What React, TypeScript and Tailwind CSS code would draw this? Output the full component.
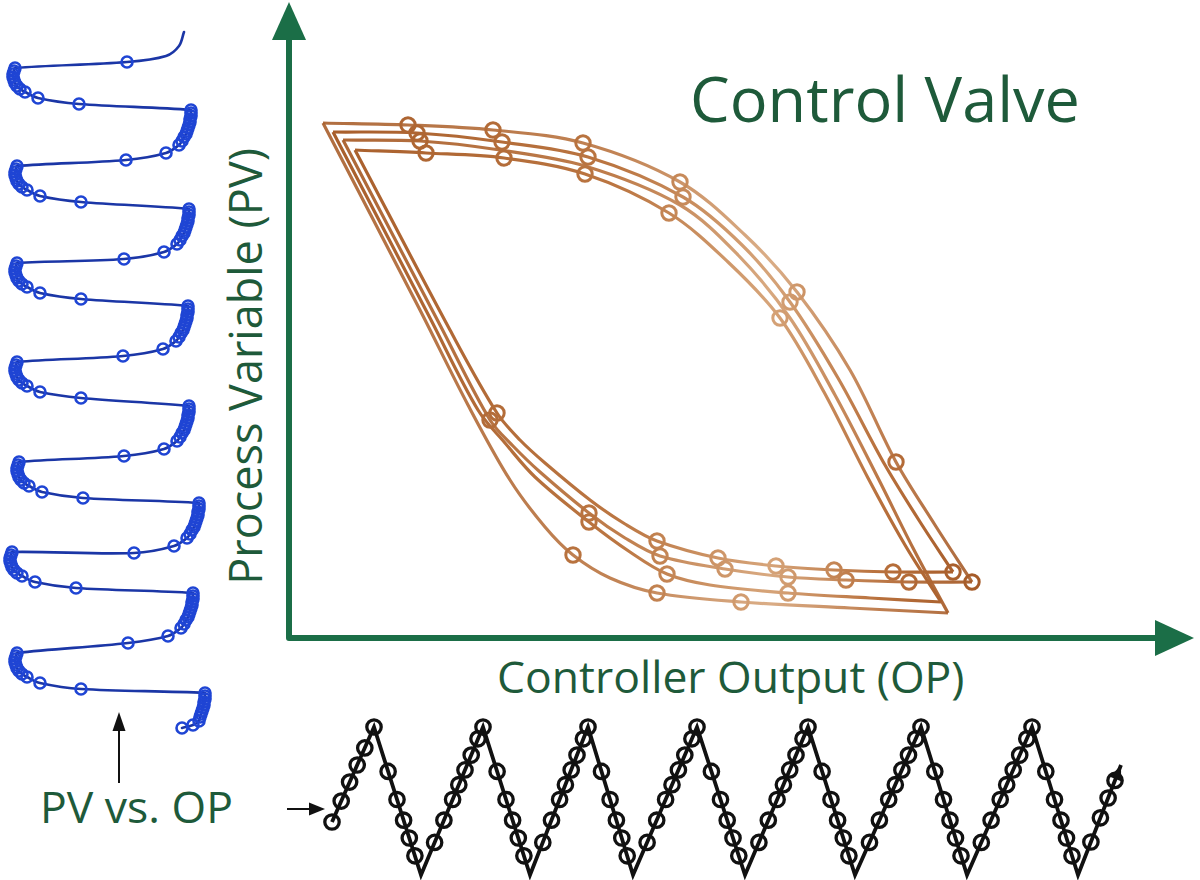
import React from "react";

type Pt = [number, number];
type Node = [number, number, number?];

const GREEN = "#1b6e47";
const INK = "#111111";

const unit = (x: number, y: number): Pt => {
  const l = Math.hypot(x, y) || 1;
  return [x / l, y / l];
};

const r1 = (n: number) => Math.round(n * 10) / 10;

// smooth curve through points, tangent length limited per segment so tight clusters don't overshoot
function smoothPath(nodes: Node[]): string {
  const pts = nodes.map((n) => [n[0], n[1]] as Pt);
  let d = `M${pts[0][0]} ${pts[0][1]}`;
  for (let i = 0; i < pts.length - 1; i++) {
    const p0 = pts[i - 1] ?? pts[i];
    const p1 = pts[i];
    const p2 = pts[i + 1];
    const p3 = pts[i + 2] ?? p2;
    const len = Math.hypot(p2[0] - p1[0], p2[1] - p1[1]) / 3;
    const t1 = unit(p2[0] - p0[0], p2[1] - p0[1]);
    const t2 = unit(p3[0] - p1[0], p3[1] - p1[1]);
    d += ` C${r1(p1[0] + t1[0] * len)} ${r1(p1[1] + t1[1] * len)} ${r1(p2[0] - t2[0] * len)} ${r1(p2[1] - t2[1] * len)} ${p2[0]} ${p2[1]}`;
  }
  return d;
}

const marks = (nodes: Node[]) => nodes.filter((n) => n[2]);

// ---------- blue PV vs OP trace ----------
const lefts: Pt[] = [[15, 68], [17, 166], [17, 263], [17, 362], [19, 462], [12, 552], [17, 653]];
const rights: Pt[] = [[191, 110], [189, 209], [188, 306], [189, 406], [199, 503], [193, 593], [205, 693]];
const leftCluster: Pt[] = [[0, 0], [-1, 3], [-2, 6], [-2, 9], [-1, 12], [0, 15], [2, 18], [5, 21], [10, 24]];
const rightCluster: Pt[] = [[0, 0], [0, 3], [0, 6], [-1, 9], [-1, 12], [-2, 15], [-3, 18], [-4, 21], [-5, 24], [-7, 27], [-9, 31], [-12, 35]];
const rightEnd: Pt[] = [[0, 0], [0, 3], [0, 6], [-1, 9], [-1, 12], [-2, 15], [-3, 18], [-4, 21], [-5, 24], [-6, 28], [-12, 32], [-23, 35]];

const blueNodes: Node[] = [[184, 32], [179, 46], [166, 56], [127, 62, 1]];
lefts.forEach((l, i) => {
  leftCluster.forEach(([dx, dy]) => blueNodes.push([l[0] + dx, l[1] + dy, 1]));
  blueNodes.push([l[0] + 23, l[1] + 30, 1], [l[0] + 64, l[1] + 36, 1]);
  const r = rights[i];
  const last = i === lefts.length - 1;
  (last ? rightEnd : rightCluster).forEach(([dx, dy]) => blueNodes.push([r[0] + dx, r[1] + dy, 1]));
  if (!last) blueNodes.push([r[0] - 25, r[1] + 43, 1], [r[0] - 65, r[1] + 50, 1]);
});

// ---------- copper hysteresis loops ----------
const topBranches: Node[][] = [
  [[323, 123], [408, 125, 1], [493, 130, 1], [583, 143, 1], [680, 182, 1], [745, 235], [797, 292, 1], [850, 370], [896, 462, 1], [935, 525], [972, 582, 1]],
  [[333, 132], [417, 133, 1], [502, 142, 1], [588, 157, 1], [683, 197, 1], [742, 245], [790, 302, 1], [838, 378], [885, 465], [922, 525], [953, 572, 1]],
  [[343, 140], [420, 141, 1], [500, 150], [585, 166], [680, 205], [738, 255], [790, 318], [835, 395], [878, 478], [913, 548], [948, 613]],
  [[355, 150], [426, 153, 1], [504, 158, 1], [585, 174, 1], [669, 213, 1], [728, 262], [780, 318, 1], [824, 392], [868, 478], [905, 545], [941, 602]],
];

const bottomBranches: Node[][] = [
  [[323, 123], [420, 310], [468, 405], [510, 480], [545, 527], [573, 555, 1], [610, 578], [657, 593, 1], [741, 602, 1], [850, 608], [948, 613]],
  [[333, 132], [430, 318], [478, 410], [505, 443], [535, 477], [589, 522, 1], [630, 552], [667, 574, 1], [710, 585], [788, 593, 1], [870, 598], [941, 602]],
  [[343, 140], [440, 325], [490, 420, 1], [513, 446], [540, 472], [589, 513, 1], [625, 538], [660, 556, 1], [725, 569, 1], [788, 577, 1], [846, 580, 1], [909, 582, 1], [972, 582]],
  [[355, 150], [450, 330], [497, 413, 1], [520, 440], [545, 463], [590, 500], [625, 524], [657, 541, 1], [718, 558, 1], [776, 566, 1], [834, 570, 1], [893, 572, 1], [953, 572]],
];

const loopOpacity = [0.9, 1, 0.95, 1];

// ---------- black sawtooth (controller output) ----------
const peaks = [374, 483, 588, 697, 808, 921, 1032];
const troughs = [421, 530, 633, 745, 855, 967, 1078];
const TOP = 727;
const BOT = 875;
const START: Pt = [332, 822];
const END: Pt = [1121, 765];

const lerp = (a: Pt, b: Pt, t: number): Pt => [a[0] + (b[0] - a[0]) * t, a[1] + (b[1] - a[1]) * t];

const sawVerts: Pt[] = [START];
peaks.forEach((p, i) => sawVerts.push([p, TOP], [troughs[i], BOT]));
sawVerts.push(END);

const sawDots: Pt[] = [];
[0, 0.22, 0.42, 0.6, 0.78, 1].forEach((t) => sawDots.push(lerp(START, [peaks[0], TOP], t)));
peaks.forEach((p, i) => {
  const pk: Pt = [p, TOP];
  const tr: Pt = [troughs[i], BOT];
  [0.3, 0.49, 0.63, 0.75, 0.87].forEach((t) => sawDots.push(lerp(pk, tr, t)));
  if (i < peaks.length - 1) {
    [0.22, 0.37, 0.51, 0.61, 0.71, 0.81, 0.92, 1].forEach((t) => sawDots.push(lerp(tr, [peaks[i + 1], TOP], t)));
  }
});
[0.3, 0.52, 0.7, 0.86].forEach((t) => sawDots.push(lerp([troughs[6], BOT], END, t)));

const endDir = unit(END[0] - troughs[6], END[1] - BOT);
const endHead = () => {
  const [ux, uy] = endDir;
  const bx = END[0] - ux * 15;
  const by = END[1] - uy * 15;
  return `${END[0]},${END[1]} ${r1(bx - uy * 6)},${r1(by + ux * 6)} ${r1(bx + uy * 6)},${r1(by - ux * 6)}`;
};

function App() {
  return (
    <div className="w-[1200px] h-[880px] bg-white overflow-hidden flex flex-col font-['Open_Sans','Liberation_Sans',sans-serif] text-[#1e5a3a]">
      <div className="flex h-[712px]">
        {/* PV vs OP trace */}
        <svg width={222} height={712} viewBox="0 0 222 712" className="shrink-0 overflow-visible">
          <path d={smoothPath(blueNodes)} fill="none" stroke="#1b36a6" strokeWidth={2.6} strokeLinecap="round" />
          {marks(blueNodes).map((n, i) => (
            <circle key={i} cx={n[0]} cy={n[1]} r={5.5} fill="none" stroke="#1f45d4" strokeWidth={2.6} />
          ))}
        </svg>

        {/* y axis label */}
        <div className="w-[63px] shrink-0 flex flex-col items-start pt-[148px]">
          <span className="[writing-mode:vertical-rl] rotate-180 text-[45px] leading-none whitespace-nowrap">
            Process Variable (PV)
          </span>
        </div>

        {/* plot */}
        <div className="relative flex-1 flex flex-col">
          <svg width={915} height={648} viewBox="285 0 915 648" className="overflow-visible">
            <defs>
              <linearGradient id="copper" gradientUnits="userSpaceOnUse" x1={320} y1={0} x2={980} y2={0}>
                <stop offset="0" stopColor="#a85e2b" />
                <stop offset="0.45" stopColor="#bb7642" />
                <stop offset="0.68" stopColor="#d6a479" />
                <stop offset="0.85" stopColor="#b8703c" />
                <stop offset="1" stopColor="#a45a28" />
              </linearGradient>
            </defs>

            {bottomBranches.map((b, i) => (
              <path key={`b${i}`} d={smoothPath(b)} fill="none" stroke="url(#copper)" strokeOpacity={loopOpacity[i]} strokeWidth={3.2} strokeLinejoin="round" />
            ))}
            {topBranches.map((b, i) => (
              <path key={`t${i}`} d={smoothPath(b)} fill="none" stroke="url(#copper)" strokeOpacity={loopOpacity[i]} strokeWidth={3.2} strokeLinejoin="round" />
            ))}
            {[...topBranches, ...bottomBranches].flatMap((b, j) =>
              marks(b).map((n, i) => (
                <circle key={`${j}-${i}`} cx={n[0]} cy={n[1]} r={7.2} fill="none" stroke="url(#copper)" strokeWidth={3} />
              ))
            )}

            {/* axes */}
            <polyline points="289,36 289,638 1158,638" fill="none" stroke={GREEN} strokeWidth={6} strokeLinejoin="round" />
            <polygon points="272,40 306,40 289,2" fill={GREEN} />
            <polygon points="1155,620 1155,656 1194,638" fill={GREEN} />
          </svg>

          <div className="absolute left-[405px] top-[66px] text-[63px] leading-none whitespace-nowrap">
            Control Valve
          </div>

          <div className="mt-[6px] pl-[212px] text-[44.5px] leading-none whitespace-nowrap">
            Controller Output (OP)
          </div>
        </div>
      </div>

      <div className="flex flex-1">
        <div className="w-[285px] shrink-0 pl-[40px] flex flex-col">
          <svg width={160} height={72} viewBox="40 712 160 72">
            <line x1={119} y1={783} x2={119} y2={728} stroke={INK} strokeWidth={2} />
            <polygon points="112.5,731 125.5,731 119,712" fill={INK} />
          </svg>
          <div className="text-[44.5px] leading-none whitespace-nowrap">PV vs. OP</div>
        </div>

        <svg width={915} height={168} viewBox="285 712 915 168" className="overflow-visible">
          <line x1={287} y1={809} x2={312} y2={809} stroke={INK} strokeWidth={2} />
          <polygon points="309,802.5 309,815.5 325,809" fill={INK} />
          <polyline points={sawVerts.map((p) => p.join(",")).join(" ")} fill="none" stroke={INK} strokeWidth={3.8} strokeLinejoin="miter" />
          {sawDots.map((p, i) => (
            <circle key={i} cx={r1(p[0])} cy={r1(p[1])} r={7.2} fill="none" stroke={INK} strokeWidth={3.3} />
          ))}
          <polygon points={endHead()} fill={INK} />
        </svg>
      </div>
    </div>
  );
}

export default App;
